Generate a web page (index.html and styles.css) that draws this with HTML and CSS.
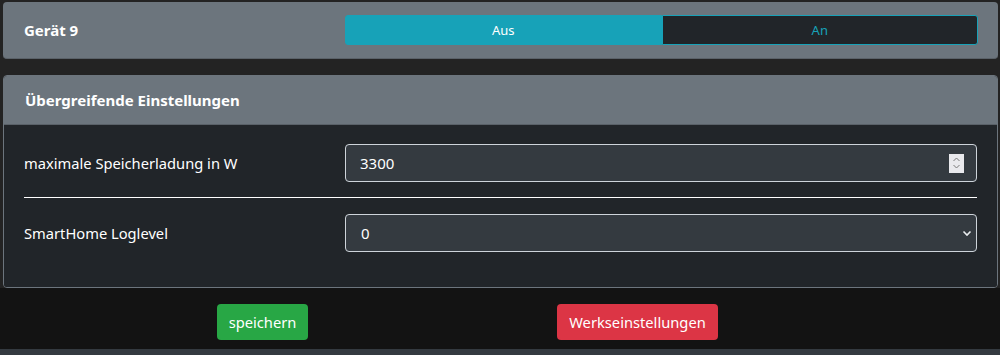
FILE: index.html
```html
<!DOCTYPE html>
<html lang="de">
<head>
    <meta charset="utf-8" />
    <title>SmartHome</title>
    <link rel="stylesheet" href="styles.css">
</head>
<body>
    <div class="page">
        <div class="device-card">
            <div class="device-name">Gerät 9</div>
            <div class="toggle">
                <button class="toggle-btn active">Aus</button>
                <button class="toggle-btn">An</button>
            </div>
        </div>

        <div class="settings-card">
            <div class="settings-head">Übergreifende Einstellungen</div>
            <div class="settings-body">
                <div class="form-row">
                    <label class="form-label">maximale Speicherladung in W</label>
                    <div class="form-control">
                        <input class="form-input" type="text" value="3300">
                        <span class="spinner">
                            <svg width="9" height="14" viewBox="0 0 9 14">
                                <path d="M1.5 5 L4.5 2 L7.5 5" fill="none" stroke="#7a7a7a" stroke-width="1"/>
                                <path d="M1.5 9 L4.5 12 L7.5 9" fill="none" stroke="#7a7a7a" stroke-width="1"/>
                            </svg>
                        </span>
                    </div>
                </div>
                <hr class="divider">
                <div class="form-row">
                    <label class="form-label">SmartHome Loglevel</label>
                    <div class="form-control select">
                        <span class="select-value">0</span>
                        <svg width="10" height="8" viewBox="0 0 10 8">
                            <path d="M1.5 2.5 L5 6 L8.5 2.5" fill="none" stroke="#e9ecef" stroke-width="1.6"/>
                        </svg>
                    </div>
                </div>
            </div>
        </div>
    </div>

    <div class="footer">
        <button class="btn btn-save">speichern</button>
        <button class="btn btn-reset">Werkseinstellungen</button>
    </div>
    <div class="bottom-bar"></div>
</body>
</html>
```

FILE: styles.css
```css
body {
    margin: 0;
    background-color: #131313;
    color: #fff;
    font-family: "Noto Sans", "Open Sans", sans-serif;
    font-size: 15px;
}

.page {
    background-color: #232323;
    padding: 2px 2px 0 3px;
}

.device-card {
    display: grid;
    grid-template-columns: 321px 1fr;
    align-items: center;
    height: 56px;
    padding: 0 20px 0 21px;
    background-color: #6c757d;
    border-radius: 4px;
    border-bottom: 1px solid #5a6168;
}

.device-name {
    font-weight: bold;
    font-size: 15px;
}

.toggle {
    display: flex;
    height: 30px;
}

.toggle-btn {
    flex: 1;
    font-family: inherit;
    font-size: 13px;
    border: 1px solid #17a2b8;
    background-color: #212529;
    color: #17a2b8;
    border-radius: 0 3px 3px 0;
}

.toggle-btn.active {
    background-color: #17a2b8;
    color: #fff;
    border-radius: 3px 0 0 3px;
}

.settings-card {
    margin-top: 16px;
    border: 1px solid #6c757d;
    border-radius: 4px;
    overflow: hidden;
}

.settings-head {
    height: 48px;
    display: flex;
    align-items: center;
    padding-left: 21px;
    background-color: #6c757d;
    border-bottom: 1px solid #5a6168;
    font-weight: bold;
    font-size: 15px;
}

.settings-body {
    background-color: #212529;
    padding: 19px 20px 35px 20px;
}

.form-row {
    display: grid;
    grid-template-columns: 321px 1fr;
    align-items: center;
}

.form-label {
    font-size: 14.7px;
}

.form-control {
    display: flex;
    align-items: center;
    height: 36px;
    padding: 0 12px 0 14px;
    background-color: #343a40;
    border: 1px solid #ced4da;
    border-radius: 4px;
}

.form-input {
    flex: 1;
    background: none;
    border: none;
    outline: none;
    color: #fff;
    font-family: inherit;
    font-size: 15px;
    padding: 0;
}

.spinner {
    display: flex;
    align-items: center;
    justify-content: center;
    width: 15px;
    height: 19px;
    background-color: #e9e9ed;
}

.select {
    justify-content: space-between;
    padding: 0 4px 0 15px;
}

.select-value {
    font-size: 15px;
}

.divider {
    border: none;
    border-top: 1px solid #fff;
    margin: 15px 0 16px 0;
}

.footer {
    display: grid;
    grid-template-columns: 525px 225px;
    justify-items: center;
    padding: 16px 0 9px 0;
}

.btn {
    height: 36px;
    padding: 0 12px;
    border: none;
    border-radius: 4px;
    color: #fff;
    font-family: inherit;
    font-size: 14.7px;
}

.btn-save {
    background-color: #28a745;
}

.btn-reset {
    background-color: #dc3545;
}

.bottom-bar {
    height: 6px;
    background-color: #343a40;
}
```
